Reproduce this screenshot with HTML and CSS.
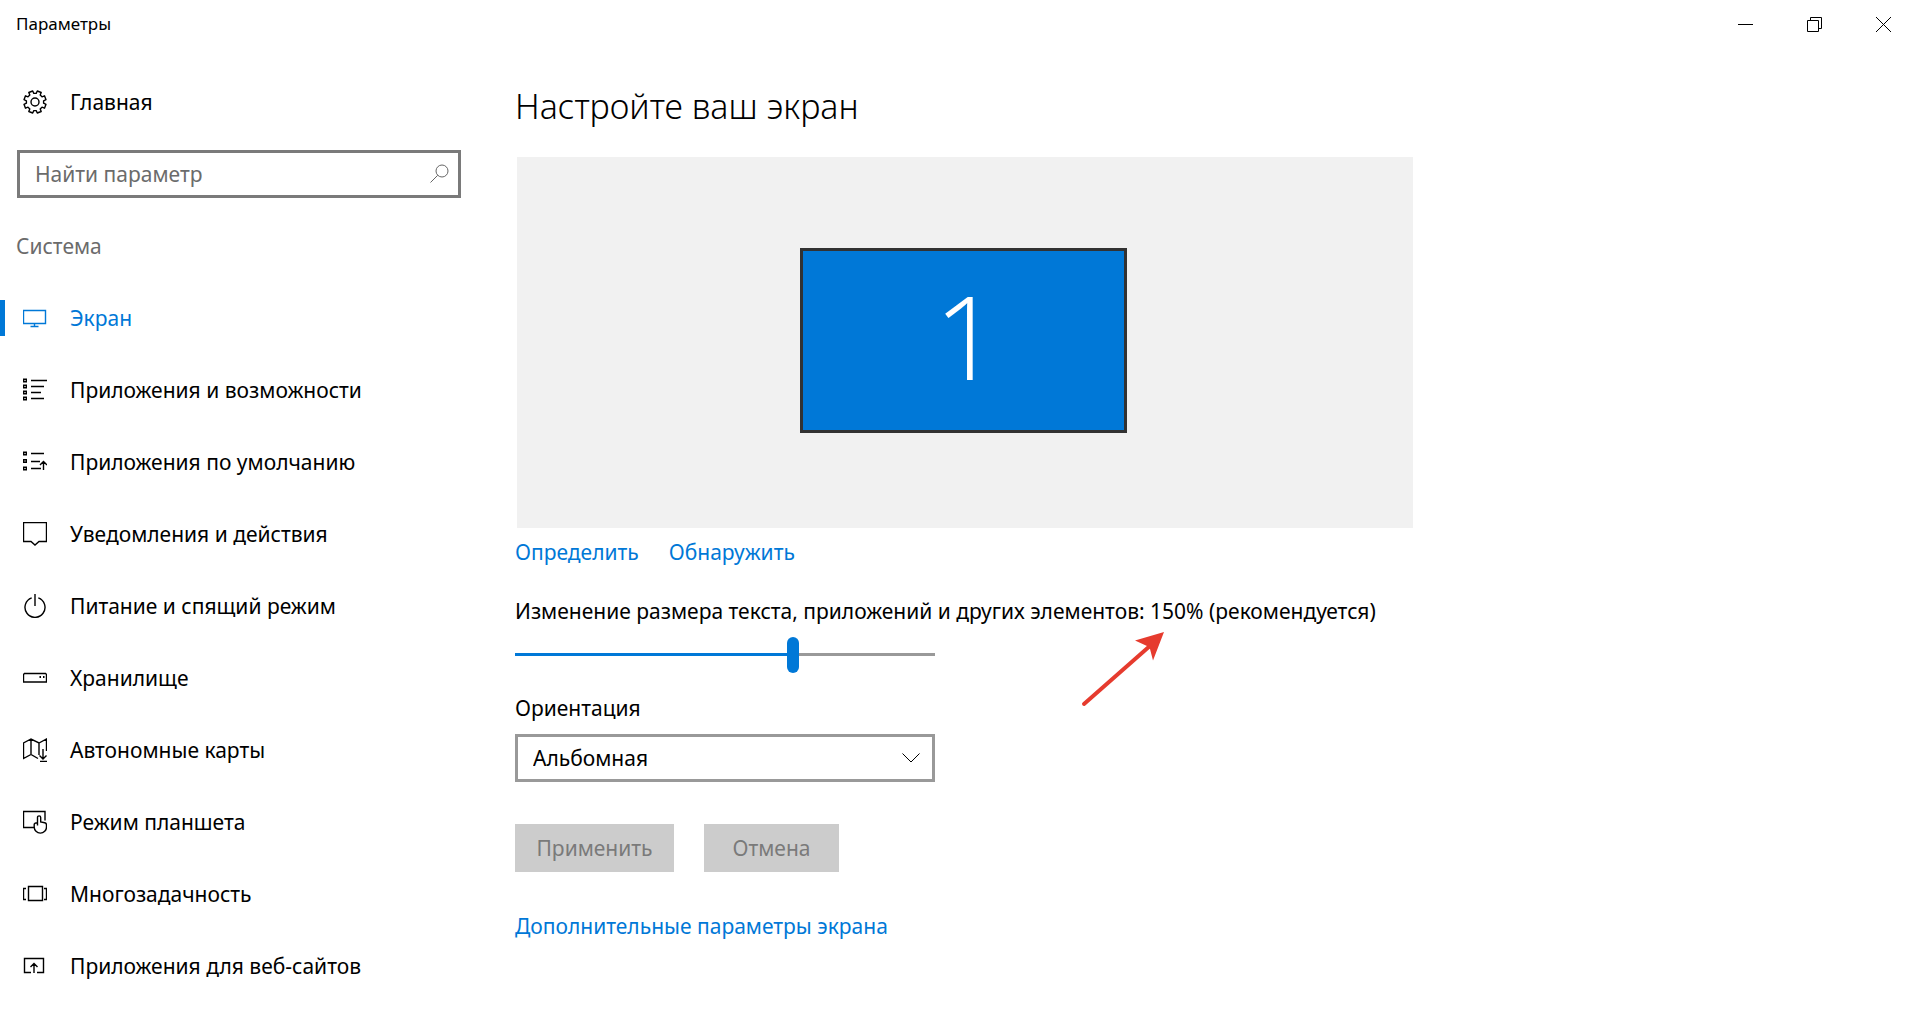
FILE: index.html
```html
<!DOCTYPE html>
<html lang="ru">
<head>
  <meta charset="UTF-8">
  <meta name="viewport" content="width=device-width, initial-scale=1.0">
  <title>Параметры</title>
  <link rel="stylesheet" href="styles.css">
</head>
<body>
  <header class="titlebar">
    <span class="titlebar-name">Параметры</span>
    <div class="window-buttons">
      <button type="button" aria-label="Свернуть">
        <svg width="15" height="15" viewBox="0 0 15 15"><path d="M0 7.5h15"/></svg>
      </button>
      <button type="button" aria-label="Восстановить">
        <svg width="15" height="15" viewBox="0 0 15 15"><path d="M.5 3.5h11v11H.5zM3.5 3.5v-3h11v11h-3"/></svg>
      </button>
      <button type="button" aria-label="Закрыть">
        <svg width="15" height="15" viewBox="0 0 15 15"><path d="M0 0l15 15M15 0L0 15"/></svg>
      </button>
    </div>
  </header>

  <div class="layout">
    <aside class="sidebar">
      <a class="nav-item" href="#">
        <svg class="icon" viewBox="0 0 24 24"><path stroke-linejoin="round" d="M13.2 3.4L14.3 1l3.900 1.500-1 2.600L19 6.800l2.500-1L23 9.700l-2.400 1.100v2.400l2.400 1.100-1.500 3.900-2.500-1-1.800 1.800 1 2.500-3.900 1.500-1.100-2.400h-2.400L9.700 23l-3.900-1.500 1-2.500L5 17.200l-2.500 1L1 14.300l2.400-1.100v-2.400L1 9.700l1.500-3.900 2.500 1L6.800 5.100l-1-2.600L9.700 1l1.100 2.400z"/><circle cx="12" cy="12" r="4"/></svg>
        <span>Главная</span>
      </a>

      <div class="search">
        <input type="text" aria-label="Найти параметр" placeholder="Найти параметр">
        <svg class="search-icon" width="19" height="19" viewBox="0 0 19 19"><circle cx="12" cy="7" r="6"/><path d="M7.7 11.3L.5 18.5"/></svg>
      </div>

      <h2 class="group-title">Система</h2>

      <nav>
        <a class="nav-item active" href="#">
          <svg class="icon" viewBox="0 0 24 24"><path d="M.5 4.500h22v13H.5zM11.500 17.500v3M7.500 20.500h8"/></svg>
          <span>Экран</span>
        </a>
        <a class="nav-item" href="#">
          <svg class="icon" viewBox="0 0 24 24"><path d="M.7 1.200h2.600v2.600H.7zM.7 7.200h2.600v2.600H.7zM.7 13.200h2.600v2.600H.7zM.7 19.200h2.600v2.600H.7zM8 2.500h16M8 8.500h13M8 14.500h10M8 20.500h13"/></svg>
          <span>Приложения и возможности</span>
        </a>
        <a class="nav-item" href="#">
          <svg class="icon" viewBox="0 0 24 24"><path d="M.7 2.200h2.600v2.600H.7zM.7 9.700h2.600v2.600H.7zM.7 17.200h2.600v2.600H.7zM8 3.500h13M8 11.500h9M8 18.500h10M20.500 20v-8.500M17 15l3.500-3.500L24 15"/></svg>
          <span>Приложения по умолчанию</span>
        </a>
        <a class="nav-item" href="#">
          <svg class="icon" viewBox="0 0 24 24"><path d="M.5.500h23v19h-7.500L12 23l-4-3.500H.5z"/></svg>
          <span>Уведомления и действия</span>
        </a>
        <a class="nav-item" href="#">
          <svg class="icon" viewBox="0 0 24 24"><path d="M12 0v12M8.700 3.900a10 10 0 1 0 6.600 0"/></svg>
          <span>Питание и спящий режим</span>
        </a>
        <a class="nav-item" href="#">
          <svg class="icon" viewBox="0 0 24 24"><path d="M1.500 7.500h21l1 1v7.500H.5V8.500z"/><path d="M16.500 11h1.500M20 11h1.500" stroke-width="2"/></svg>
          <span>Хранилище</span>
        </a>
        <a class="nav-item" href="#">
          <svg class="icon" viewBox="0 0 24 24"><path d="M15 20.500l-7-4-7.500 4V5L8 1l8 4 7.500-4v12M8 1v15.500M16 5v12M20 11v10M16.500 17.500L20 21l3.500-3.500M17 23.500h7"/></svg>
          <span>Автономные карты</span>
        </a>
        <a class="nav-item" href="#">
          <svg class="icon" viewBox="0 0 24 24"><path d="M11 17.500H.5v-16h21.500v9"/><path d="M14.500 15.500V7.500a1.600 1.600 0 0 1 3.200 0V12l4 .8q1.800.4 1.800 2.200v2a6 6 0 0 1-12.300 0v-2.500q0-1.800 3.300-1.800"/></svg>
          <span>Режим планшета</span>
        </a>
        <a class="nav-item" href="#">
          <svg class="icon" viewBox="0 0 24 24"><path d="M5.500 4.500h14v14h-14zM3 6.500H.5v11H3M21 6.500h2.500v11H21"/></svg>
          <span>Многозадачность</span>
        </a>
        <a class="nav-item" href="#">
          <svg class="icon" viewBox="0 0 24 24"><path d="M8 18.500H1.500v-14h19v14H14M11 19V9.500M7.500 13L11 9.500l3.500 3.500"/></svg>
          <span>Приложения для веб-сайтов</span>
        </a>
      </nav>
    </aside>

    <main class="content">
      <h1>Настройте ваш экран</h1>

      <div class="preview">
        <div class="monitor">1</div>
      </div>

      <div class="links">
        <a href="#">Определить</a>
        <a href="#">Обнаружить</a>
      </div>

      <div class="scale">
        <label for="scale">Изменение размера текста, приложений и других элементов: 150% (рекомендуется)</label>
        <input type="range" id="scale" min="100" max="175" step="25" value="150">
        <!-- red arrow pointing at the scale value -->
        <svg class="arrow" width="90" height="82" viewBox="0 0 90 82"><path class="arrow-line" d="M4 76L71 17"/><path class="arrow-head" d="M84 4L55 12.500 67 18 70 21 73 32.500Z"/></svg>
      </div>

      <div class="orientation">
        <label for="orientation">Ориентация</label>
        <div class="select-box">
          <select id="orientation">
            <option>Альбомная</option>
            <option>Книжная</option>
          </select>
          <svg class="chevron" width="18" height="10" viewBox="0 0 18 10"><path d="M.5.5L9 9 17.500.5"/></svg>
        </div>
      </div>

      <div class="actions">
        <button type="button" class="apply" disabled>Применить</button>
        <button type="button" disabled>Отмена</button>
      </div>

      <a class="more" href="#">Дополнительные параметры экрана</a>
    </main>
  </div>
</body>
</html>
```
FILE: styles.css
```css
* {
  box-sizing: border-box;
}
body {
  margin: 0;
  background: #fff;
  color: #000;
  font-family: "Noto Sans", "Open Sans", sans-serif;
  font-size: 21px;
  line-height: 30px;
}
a {
  color: #0078d7;
  text-decoration: none;
}
svg {
  fill: none;
  stroke: currentColor;
}
input,
select,
button {
  font: inherit;
}

/* title bar */
.titlebar {
  display: flex;
  justify-content: space-between;
  align-items: center;
  height: 48px;
  padding-left: 16px;
}
.titlebar-name {
  font-size: 17px;
}
.window-buttons {
  display: flex;
}
.window-buttons button {
  display: flex;
  align-items: center;
  justify-content: center;
  width: 69px;
  height: 48px;
  padding: 0;
  border: 0;
  background: none;
  color: #000;
}

.layout {
  display: flex;
}

/* sidebar */
.sidebar {
  flex: 0 0 461px;
  padding-top: 18px;
}
.nav-item {
  display: flex;
  align-items: center;
  gap: 23px;
  height: 72px;
  padding-left: 23px;
  color: #000;
}
.icon {
  width: 24px;
  height: 24px;
  stroke-width: 1.4;
}
.nav-item.active {
  position: relative;
  color: #0078d7;
}
.nav-item.active::before {
  content: "";
  position: absolute;
  left: 0;
  top: 18px;
  width: 5px;
  height: 36px;
  background: #0078d7;
}
.search {
  position: relative;
  margin: 12px 0 12px 17px;
}
.search input {
  display: block;
  width: 100%;
  height: 48px;
  padding: 0 48px 0 15px;
  border: 3px solid #7a7a7a;
  border-radius: 0;
  background: #fff;
}
.search input::placeholder {
  color: #6b6b6b;
}
.search-icon {
  position: absolute;
  right: 12px;
  top: 14px;
  color: #666;
}
.group-title {
  margin: 0;
  padding-left: 16px;
  color: #6b6b6b;
  font-size: 21px;
  font-weight: 400;
  line-height: 72px;
}

/* content */
.content {
  flex: 1;
  max-width: 952px;
  padding: 34px 0 0 54px;
}
h1 {
  margin: 0 0 27px;
  font-size: 34px;
  font-weight: 300;
  line-height: 48px;
}
.preview {
  display: flex;
  align-items: center;
  justify-content: center;
  height: 371px;
  margin: 0 0 9px 2px;
  padding: 0 4px 4px 0;
  background: #f1f1f1;
}
.monitor {
  width: 327px;
  height: 185px;
  border: 3px solid #323232;
  background: #0078d7;
  color: #fff;
  font-family: "Open Sans", sans-serif;
  font-size: 116px;
  font-weight: 300;
  line-height: 168px;
  text-align: center;
  text-indent: 8px;
}
.links {
  display: flex;
  gap: 30px;
  margin-bottom: 29px;
}
.scale,
.orientation {
  position: relative;
  display: flex;
  flex-direction: column;
}
.scale {
  gap: 11px;
  margin-bottom: 20px;
}
.scale input {
  -webkit-appearance: none;
  appearance: none;
  width: 420px;
  height: 36px;
  margin: 0;
  background: linear-gradient(to right, #0078d7 67%, #999 67%) 0 16px / 100% 3px no-repeat;
}
.scale input::-webkit-slider-thumb {
  -webkit-appearance: none;
  width: 12px;
  height: 36px;
  border-radius: 6px;
  background: #0078d7;
}
.arrow {
  position: absolute;
  left: 565px;
  top: 32px;
}
.arrow-line {
  stroke: #e63b2e;
  stroke-width: 4;
  stroke-linecap: round;
}
.arrow-head {
  fill: #e63b2e;
  stroke: none;
}
.orientation {
  gap: 11px;
  margin-bottom: 42px;
}
.select-box {
  position: relative;
  width: 420px;
}
.select-box select {
  -webkit-appearance: none;
  appearance: none;
  display: block;
  width: 100%;
  height: 48px;
  padding: 0 48px 0 15px;
  border: 3px solid #999;
  border-radius: 0;
  background: #fff;
  color: #000;
}
.chevron {
  position: absolute;
  right: 15px;
  top: 19px;
  pointer-events: none;
}
.actions {
  display: flex;
  gap: 30px;
  margin-bottom: 39px;
}
.actions button {
  width: 135px;
  height: 48px;
  padding: 0;
  border: 0;
  background: #ccc;
  color: #7a7a7a;
}
.actions .apply {
  width: 159px;
}
```
